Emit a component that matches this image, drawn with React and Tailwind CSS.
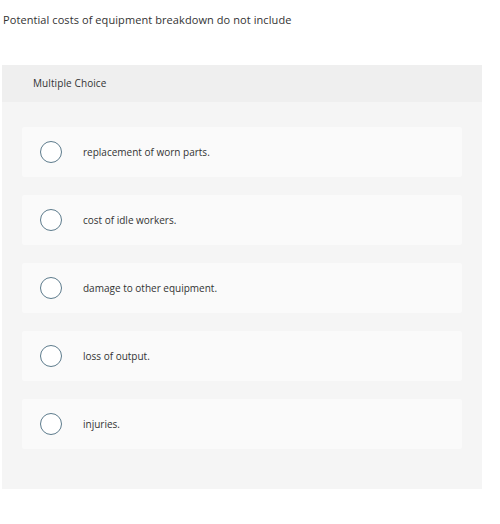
export default function App() {
  const options = [
    "replacement of worn parts.",
    "cost of idle workers.",
    "damage to other equipment.",
    "loss of output.",
    "injuries.",
  ];
  return (
    <div className="w-[500px] h-[524px] bg-white" style={{ fontFamily: "'Open Sans', 'Liberation Sans', sans-serif" }}>
      <div className="pt-[12px] pl-[3px] h-[65px] text-[11px] text-[#333] tracking-[0.08px]">
        Potential costs of equipment breakdown do not include
      </div>
      <div className="ml-[2px] w-[480px] bg-[#f5f5f5]">
        <div className="h-[37px] bg-[#efefef] flex items-center pl-[31px] text-[10px] text-[#333] tracking-[0.1px]">
          Multiple Choice
        </div>
        <div className="flex flex-col gap-[18px] pt-[25px] pb-[40px] px-[20px]">
          {options.map((o) => (
            <div key={o} className="h-[50px] bg-[#fafafa] rounded-[2px] flex items-center pl-[18px]">
              <div className="w-[22px] h-[22px] rounded-full border-[1.5px] border-[#5d7b8c] bg-white" />
              <div className="ml-[21px] text-[10px] text-[#333]">{o}</div>
            </div>
          ))}
        </div>
      </div>
    </div>
  );
}
